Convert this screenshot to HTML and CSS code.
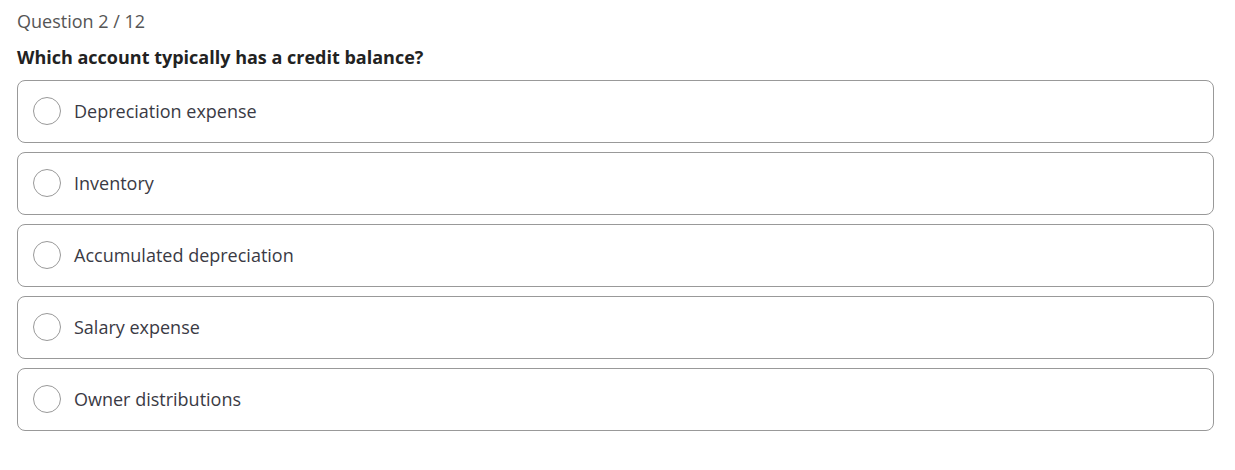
FILE: index.html
```html
<!DOCTYPE html>
<html lang="en">
<head>
<meta charset="utf-8">
<title>Quiz</title>
<link rel="stylesheet" href="styles.css">
</head>
<body>
<main class="quiz">
  <p class="counter">Question 2 / 12</p>
  <h1 class="question">Which account typically has a credit balance?</h1>
  <div class="options">
    <label class="option"><span class="radio"></span><span class="label">Depreciation expense</span></label>
    <label class="option"><span class="radio"></span><span class="label">Inventory</span></label>
    <label class="option"><span class="radio"></span><span class="label">Accumulated depreciation</span></label>
    <label class="option"><span class="radio"></span><span class="label">Salary expense</span></label>
    <label class="option"><span class="radio"></span><span class="label">Owner distributions</span></label>
  </div>
</main>
</body>
</html>
```
FILE: styles.css
```css
* { box-sizing: border-box; }
body {
  margin: 0;
  background: #fff;
  font-family: "Open Sans", "Liberation Sans", sans-serif;
}
.quiz {
  padding: 9px 21px 0 17px;
}
.counter {
  margin: 0;
  font-size: 18px;
  line-height: 24px;
  color: #555;
}
.question {
  margin: 12px 0 11px;
  font-size: 18px;
  line-height: 24px;
  font-weight: 700;
  color: #222;
}
.options {
  display: flex;
  flex-direction: column;
  gap: 9px;
}
.option {
  display: flex;
  align-items: center;
  height: 63px;
  padding: 0 15px 1px;
  border: 1px solid #999;
  border-radius: 8px;
  gap: 13px;
}
.radio {
  width: 28px;
  height: 28px;
  border: 1px solid #999;
  border-radius: 50%;
  flex: none;
}
.label {
  font-size: 18px;
  line-height: 24px;
  color: #3a3a44;
}
```
